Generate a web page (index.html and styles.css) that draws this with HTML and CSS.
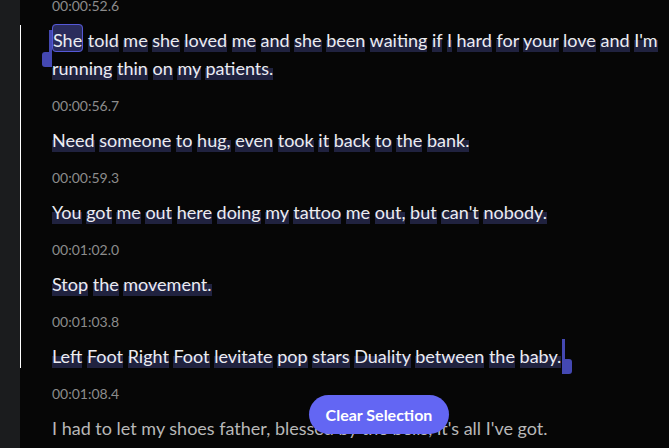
FILE: index.html
```html
<!DOCTYPE html>
<html lang="en">
<head>
    <meta charset="UTF-8">
    <meta name="viewport" content="width=device-width, initial-scale=1.0">
    <title>Transcript</title>
    <link rel="stylesheet" href="styles.css">
</head>
<body>
    <div class="app">
        <div class="sidebar"></div>
        <div class="transcript">
            <div class="range-line"></div>

            <div class="segment">
                <div class="time">00:00:52.6</div>
                <p class="text">
                    <span class="w picked">She<i class="handle start"></i></span> <span class="w">told</span> <span class="w">me</span> <span class="w">she</span> <span class="w">loved</span> <span class="w">me</span> <span class="w">and</span> <span class="w">she</span> <span class="w">been</span> <span class="w">waiting</span> <span class="w">if</span> <span class="w">I</span> <span class="w">hard</span> <span class="w">for</span> <span class="w">your</span> <span class="w">love</span> <span class="w">and</span> <span class="w">I'm</span> <span class="w">running</span> <span class="w">thin</span> <span class="w">on</span> <span class="w">my</span> <span class="w">patients.</span>
                </p>
            </div>

            <div class="segment">
                <div class="time">00:00:56.7</div>
                <p class="text">
                    <span class="w">Need</span> <span class="w">someone</span> <span class="w">to</span> <span class="w">hug,</span> <span class="w">even</span> <span class="w">took</span> <span class="w">it</span> <span class="w">back</span> <span class="w">to</span> <span class="w">the</span> <span class="w">bank.</span>
                </p>
            </div>

            <div class="segment">
                <div class="time">00:00:59.3</div>
                <p class="text">
                    <span class="w">You</span> <span class="w">got</span> <span class="w">me</span> <span class="w">out</span> <span class="w">here</span> <span class="w">doing</span> <span class="w">my</span> <span class="w">tattoo</span> <span class="w">me</span> <span class="w">out,</span> <span class="w">but</span> <span class="w">can't</span> <span class="w">nobody.</span>
                </p>
            </div>

            <div class="segment">
                <div class="time">00:01:02.0</div>
                <p class="text">
                    <span class="w">Stop</span> <span class="w">the</span> <span class="w">movement.</span>
                </p>
            </div>

            <div class="segment">
                <div class="time">00:01:03.8</div>
                <p class="text">
                    <span class="w">Left</span> <span class="w">Foot</span> <span class="w">Right</span> <span class="w">Foot</span> <span class="w">levitate</span> <span class="w">pop</span> <span class="w">stars</span> <span class="w">Duality</span> <span class="w">between</span> <span class="w">the</span> <span class="w">baby.<i class="handle end"></i></span>
                </p>
            </div>

            <div class="segment">
                <div class="time">00:01:08.4</div>
                <p class="text plain">I had to let my shoes father, blessed by the bells, it's all I've got.</p>
            </div>

            <button class="clear-btn">Clear Selection</button>
        </div>
    </div>
</body>
</html>
```

FILE: styles.css
```css
body {
    margin: 0;
    padding: 0;
    background-color: #060606;
    font-family: "Lato", "Liberation Sans", sans-serif;
    overflow: hidden;
}
.app {
    display: flex;
    height: 448px;
}
.sidebar {
    width: 20px;
    flex-shrink: 0;
    background-color: #1b1c1e;
}
.transcript {
    position: relative;
    flex: 1;
    padding-left: 32px;
    margin-top: -2px;
}
.range-line {
    position: absolute;
    left: 0;
    top: 27px;
    width: 1px;
    height: 343px;
    background-color: #ffffff;
}
.segment {
    padding-bottom: 16px;
}
.time {
    font-size: 14px;
    line-height: 16px;
    color: #8c8c8c;
    margin-bottom: 12px;
}
.text {
    margin: 0;
    width: 614px;
    font-size: 18px;
    line-height: 28px;
    color: #ececf2;
}
.text.plain {
    color: #b8b8b8;
    white-space: nowrap;
}
.w {
    position: relative;
    padding: 5px 0 1px 0;
    background: linear-gradient(to bottom, transparent 58%, #20223f 58%);
}
.w.picked {
    padding: 4px 0 0 0;
    background: #2a2c5c;
    border: 1px solid #5558d6;
    border-radius: 4px;
}
.handle {
    position: absolute;
    width: 3px;
    background-color: #4448b2;
}
.handle::after {
    content: "";
    position: absolute;
    width: 10px;
    height: 15px;
    background-color: #4448b2;
}
.handle.start {
    left: -4px;
    top: 5px;
    height: 22px;
}
.handle.start::after {
    right: 0;
    bottom: -15px;
    border-radius: 3px 0 0 3px;
}
.handle.end {
    right: -4px;
    top: -1px;
    height: 22px;
}
.handle.end::after {
    left: 0;
    top: 20px;
    border-radius: 0 3px 3px 0;
}
.clear-btn {
    position: absolute;
    left: 289px;
    top: 397px;
    width: 140px;
    height: 39px;
    border: none;
    border-radius: 20px;
    background-color: #6366f3;
    color: #ffffff;
    font-family: "Lato", "Liberation Sans", sans-serif;
    font-size: 16px;
    font-weight: 700;
    cursor: pointer;
}
```
